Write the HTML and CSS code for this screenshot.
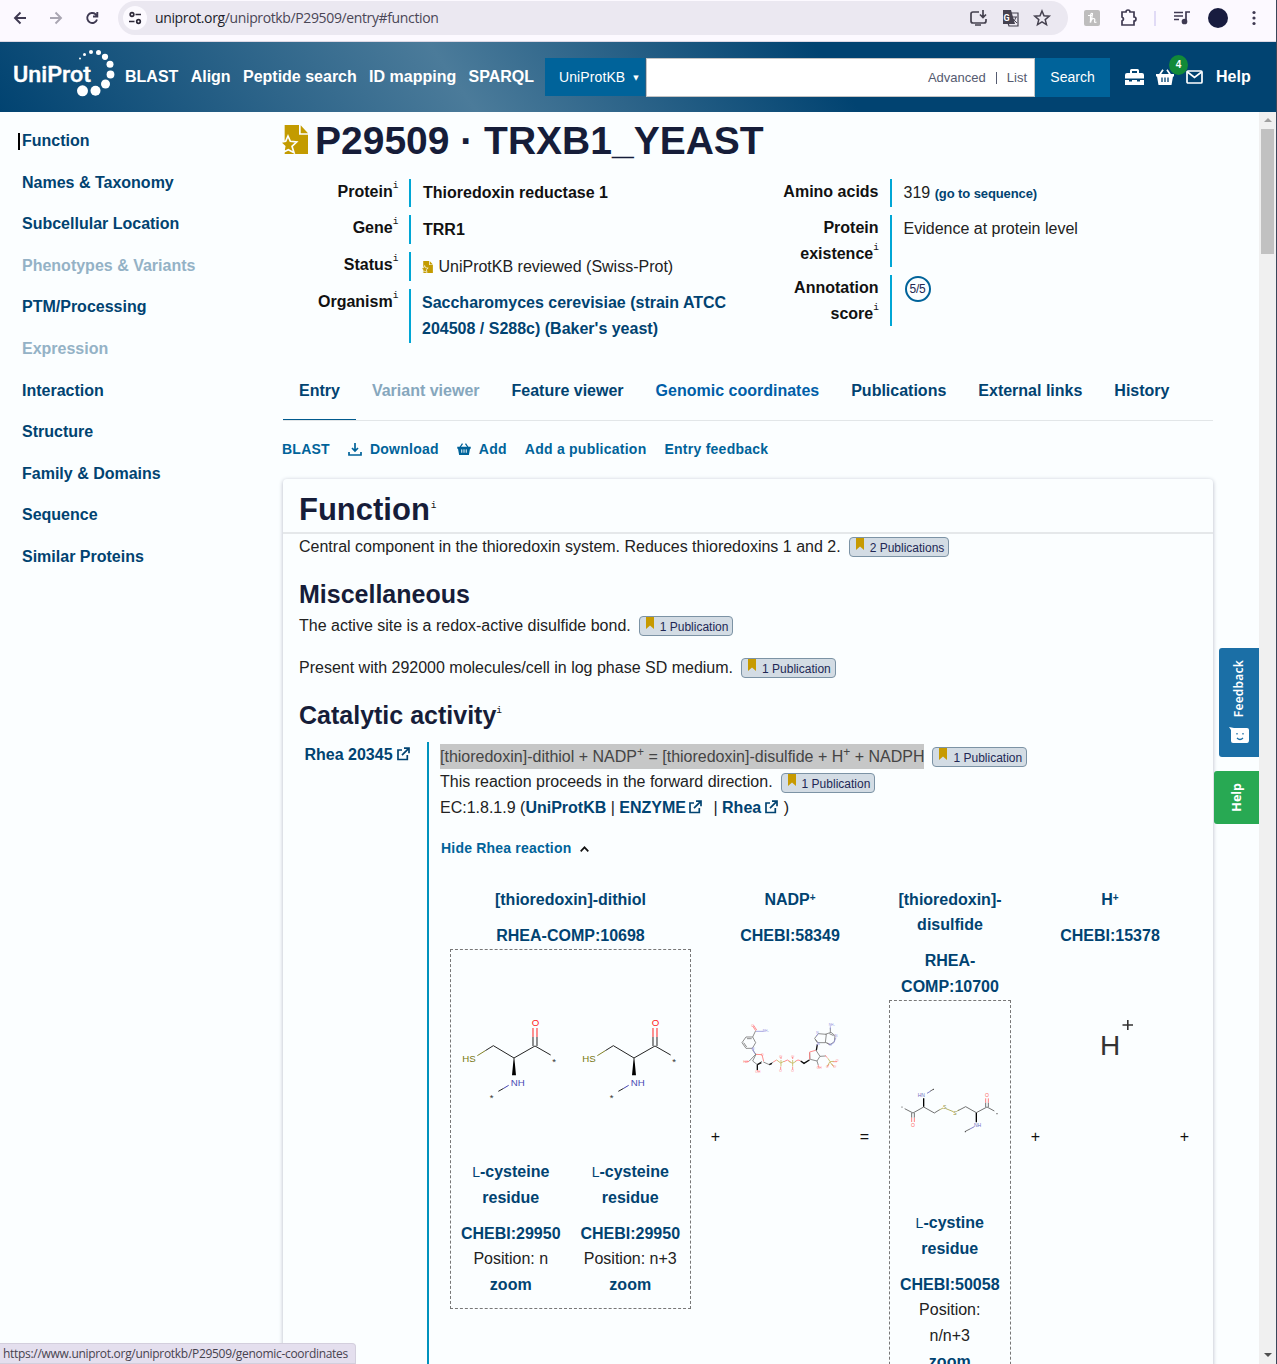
FILE: index.html
```html
<!DOCTYPE html>
<html lang="en">
<head>
<meta charset="utf-8">
<title>P29509 · TRXB1_YEAST</title>
<link rel="stylesheet" href="styles.css">
</head>
<body>
<svg class="defs" width="0" height="0" aria-hidden="true">
  <symbol id="reviewed" viewBox="0 0 78 87"><path fill="#c39b00" d="M8 0h43v29h27v58H8z"/><path fill="#c39b00" d="M56 1v24h22z"/><path fill="#c39b00" stroke="#fbfeff" stroke-width="5" d="M18 33l7 16 19 2-14 13 6 19-17-9-14 7 3-17L-5 52l16-3z"/></symbol>
  <symbol id="ext" viewBox="0 0 14 14"><path fill="none" stroke="currentColor" stroke-width="1.7" d="M6 3H2v9.5h9.300V8M8 1.200h5v5M13 1.200L6 8.200"/></symbol>
  <symbol id="basket" viewBox="0 0 18 16"><path fill="currentColor" d="M0 5h18v2.500h-1L15.500 16h-13L1 7.500H0z"/><path fill="none" stroke="currentColor" stroke-width="1.700" d="M3.500 6L7 .8M14.500 6L11 .8"/><path stroke="var(--hole)" stroke-width="1.300" d="M6 8.500v4.500M9 8.500v4.500M12 8.500v4.500"/></symbol>
  <symbol id="mark" viewBox="0 0 8 12"><path fill="#c79a00" d="M0 0h8v12L4 8.500 0 12z"/></symbol>
  <symbol id="cysteine-bonds" viewBox="451 950 120 209">
    <g transform="translate(440 940) scale(.33333)">
      <path fill="none" stroke="#222" stroke-width="3" d="M136 332L160 317 222 354 285 318 332 345M279 318V291M291 318V291M175 454l16-9"/>
      <path stroke="#f22" stroke-width="3" d="M279 291v-27M291 291v-27"/>
      <path stroke="#808022" stroke-width="3" d="M112 347l24-15"/><path stroke="#4040b0" stroke-width="3" d="M191 445l15-9"/>
      <path d="M221 354h2l5 52h-12z"/>
    </g>
  </symbol>
</svg>

<div class="browser">
  <svg class="nav-icons" width="110" height="36" viewBox="0 0 110 36" fill="none" stroke="#3f3a52" stroke-width="1.900"><path d="M26 18H15M20.500 12.500L15 18l5.500 5.500"/><path stroke="#a9a6b2" d="M50 18h11M55.500 12.500L61 18l-5.500 5.500"/><path d="M97 19.500a5 5 0 1 1-1.500-5.300L97 15.800M97.300 12v4.500H93"/></svg>
  <div class="omnibox">
    <svg class="site" width="24" height="24" viewBox="0 0 24 24" fill="none" stroke="#2c2838" stroke-width="1.700"><circle cx="12" cy="12" r="12" fill="#fcfaff" stroke="none"/><circle cx="9" cy="8.500" r="1.800"/><path d="M12.500 8.500H18M6 15.500h5.500"/><circle cx="15.500" cy="15.500" r="1.800"/></svg>
    <span class="url"><b>uniprot.org</b>/uniprotkb/P29509/entry#function</span>
    <svg class="omni-icons" width="90" height="24" viewBox="965 6 90 24" fill="none" stroke="#45414f" stroke-width="1.700"><path d="M979 12h-6a2 2 0 0 0-2 2v7a2 2 0 0 0 2 2h11a2 2 0 0 0 2-2v-2M983 10v7M980 14.500l3 3 3-3M975 25h6"/><path fill="#45414f" stroke="none" d="M1003 10h8l4 14h-12z"/><path stroke-width="1.200" d="M1011 13h7v13h-9l-1-3"/><text x="1003.500" y="21" font-family="Roboto, sans-serif" font-size="9" font-weight="700" fill="#fff" stroke="none">G</text><path stroke-width="1" d="M1012 17h5M1016 17q-1 4-4 6M1013 19l4 4"/><path stroke-width="1.500" d="M1042 11l2 4.800 5.200.4-4 3.400 1.300 5-4.500-2.700-4.500 2.700 1.300-5-4-3.400 5.200-.4z"/></svg>
  </div>
  <svg class="ext-icons" width="200" height="36" viewBox="1077 0 200 36" fill="none" stroke="#3f3a52" stroke-width="1.700"><rect x="1084" y="10" width="16" height="16" rx="2" fill="#bebdbd" stroke="none"/><path stroke="#fff" stroke-width="1.200" d="M1090 22.500q2.500-5 2.500-9q-2-1-2 3v6q1-4 3-4t1 3q0 1.500 2 .5M1088 15.500h4"/><path d="M1122 12h4a2 2 0 0 1 4 0h4v5a2 2 0 0 1 0 4v4h-12v-4q3-2 0-4z"/><path stroke="#dcd6f5" d="M1155 11v15"/><path d="M1174 12.500h9M1174 16h9M1174 19.500h5M1186 21v-9h4"/><circle cx="1184.500" cy="21.500" r="2" fill="#3f3a52"/><circle cx="1218" cy="18" r="10" fill="#181c3f" stroke="none"/><g fill="#3f3a52" stroke="none"><circle cx="1254" cy="12.500" r="1.600"/><circle cx="1254" cy="18" r="1.600"/><circle cx="1254" cy="23.500" r="1.600"/></g></svg>
</div>

<header class="top">
  <svg class="logo" width="102" height="50" viewBox="13 48 102 50"><text x="13" y="81.500" textLength="78" lengthAdjust="spacingAndGlyphs" font-family="Roboto, sans-serif" font-size="22.500" font-weight="500" fill="#fff" stroke="#fff" stroke-width=".4">UniProt</text><g fill="#fff"><circle cx="80" cy="58.500" r="1"/><circle cx="84.500" cy="54.500" r="1.500"/><circle cx="91" cy="52" r="2"/><circle cx="98.500" cy="52.500" r="2.500"/><circle cx="105" cy="56.800" r="3.100"/><circle cx="110" cy="64.200" r="3.500"/><circle cx="110.500" cy="74.500" r="3.900"/><circle cx="105.500" cy="84" r="4.500"/><circle cx="95.500" cy="90.800" r="5"/><circle cx="82.500" cy="90.800" r="5.500"/></g></svg>
  <nav class="links"><a>BLAST</a><a>Align</a><a>Peptide search</a><a>ID mapping</a><a>SPARQL</a></nav>
  <div class="search"><span class="ns">UniProtKB <i>▼</i></span><span class="field">Advanced<em></em>List</span><span class="go">Search</span></div>
  <div class="tools">
    <svg width="19" height="16" viewBox="0 0 19 16" fill="#fff"><path d="M5 4V1.500Q5 0 6.500 0h6Q14 0 14 1.500V4h3q2 0 2 2v3.500H0V6q0-2 2-2zM7 2v2h5V2zM0 11h4v1.500h3V11h5v1.500h3V11h4v5H0z" fill-rule="evenodd"/></svg>
    <span class="cart"><svg width="18" height="16"><use href="#basket"/></svg><b>4</b></span>
    <svg width="17" height="14" viewBox="0 0 17 14" fill="none" stroke="#fff" stroke-width="1.700"><rect x="1" y="1" width="15" height="12" rx="1"/><path d="M1.500 2l7 5.500 7-5.500"/></svg>
    <strong>Help</strong>
  </div>
</header>

<div class="page">
  <aside><a class="current">Function</a><a>Names &amp; Taxonomy</a><a>Subcellular Location</a><a class="off">Phenotypes &amp; Variants</a><a>PTM/Processing</a><a class="off">Expression</a><a>Interaction</a><a>Structure</a><a>Family &amp; Domains</a><a>Sequence</a><a>Similar Proteins</a></aside>
  <main>
    <h1><svg width="26" height="29"><use href="#reviewed"/></svg><span>P29509 · TRXB1_YEAST</span></h1>
    <div class="info">
      <dl>
        <dt class="r1">Protein<sup>i</sup></dt><dd class="r1"><b>Thioredoxin reductase 1</b></dd>
        <dt class="r2">Gene<sup>i</sup></dt><dd class="r2"><b>TRR1</b></dd>
        <dt>Status<sup>i</sup></dt><dd class="r2"><svg class="mini" width="11" height="12"><use href="#reviewed"/></svg> UniProtKB reviewed (Swiss-Prot)</dd>
        <dt>Organism<sup>i</sup></dt><dd class="r4"><a class="organism">Saccharomyces cerevisiae (strain ATCC<br>204508 / S288c) (Baker's yeast)</a></dd>
      </dl>
      <dl class="right">
        <dt>Amino acids</dt><dd class="r1">319 <a class="small">(go to sequence)</a></dd>
        <dt>Protein<br>existence<sup>i</sup></dt><dd class="r5">Evidence at protein level</dd>
        <dt>Annotation<br>score<sup>i</sup></dt><dd class="r6"><span class="score">5/5</span></dd>
      </dl>
    </div>
    <nav class="tabs"><a class="sel">Entry</a><a class="off">Variant viewer</a><a>Feature viewer</a><a class="hover">Genomic coordinates</a><a>Publications</a><a>External links</a><a>History</a></nav>
    <div class="actions"><a>BLAST</a><a><svg width="14" height="13" viewBox="0 0 14 13" fill="none" stroke="currentColor" stroke-width="1.700"><path d="M7 0v8M4 5l3 3 3-3M1 9v3h12V9"/></svg>Download</a><a><svg width="14" height="12"><use href="#basket"/></svg>Add</a><a>Add a publication</a><a>Entry feedback</a></div>

    <section class="card">
      <h2>Function<sup>i</sup></h2>
      <p class="central"><span>Central component in the thioredoxin system. Reduces thioredoxins 1 and 2.</span><span class="pub"><svg width="8" height="12"><use href="#mark"/></svg>2 Publications</span></p>
      <h3>Miscellaneous</h3>
      <p><span>The active site is a redox-active disulfide bond.</span><span class="pub"><svg width="8" height="12"><use href="#mark"/></svg>1 Publication</span></p>
      <p class="present"><span>Present with 292000 molecules/cell in log phase SD medium.</span><span class="pub"><svg width="8" height="12"><use href="#mark"/></svg>1 Publication</span></p>
      <h3 class="cat">Catalytic activity<sup>i</sup></h3>
      <div class="rhea">
        <div class="rhea-id"><a>Rhea 20345 <svg class="ex" width="14" height="14"><use href="#ext"/></svg></a></div>
        <div class="rhea-body">
          <p><span class="hl">[thioredoxin]-dithiol + NADP<sup>+</sup> = [thioredoxin]-disulfide + H<sup>+</sup> + NADPH</span><span class="pub"><svg width="8" height="12"><use href="#mark"/></svg>1 Publication</span></p>
          <p><span>This reaction proceeds in the forward direction.</span><span class="pub"><svg width="8" height="12"><use href="#mark"/></svg>1 Publication</span></p>
          <div class="ec">EC:1.8.1.9 (<a>UniProtKB</a> | <a>ENZYME <svg class="ex" width="14" height="14"><use href="#ext"/></svg></a><span class="bar">|</span> <a>Rhea <svg class="ex" width="14" height="14"><use href="#ext"/></svg></a><span class="paren">)</span></div>
          <div class="hide">Hide Rhea reaction<svg width="9" height="6" viewBox="0 0 9 6" fill="none" stroke="#111" stroke-width="1.700"><path d="M.7 5.300l3.800-4 3.800 4"/></svg></div>
          <div class="reaction">
            <div class="part wide"><a>[thioredoxin]-dithiol</a><a class="id">RHEA-COMP:10698</a>
              <div class="box">
                <div class="residue"><svg class="cys" width="120" height="209" viewBox="0 0 120 209"><use href="#cysteine-bonds" width="120" height="209"/><text x="11.300" y="112.300" fill="#777710">HS</text><text x="80.700" y="76" fill="#f22">O</text><text x="59.700" y="136" fill="#4a4ab5">NH</text><text x="101.300" y="114.700" fill="#333">*</text><text x="38.700" y="151" fill="#333">*</text></svg><a><small>L</small>-cysteine<br>residue</a><a class="id">CHEBI:29950</a><span>Position: n</span><a>zoom</a></div>
                <div class="residue"><svg class="cys" width="120" height="209" viewBox="0 0 120 209"><use href="#cysteine-bonds" width="120" height="209"/><text x="11.300" y="112.300" fill="#777710">HS</text><text x="80.700" y="76" fill="#f22">O</text><text x="59.700" y="136" fill="#4a4ab5">NH</text><text x="101.300" y="114.700" fill="#333">*</text><text x="38.700" y="151" fill="#333">*</text></svg><a><small>L</small>-cysteine<br>residue</a><a class="id">CHEBI:29950</a><span>Position: n+3</span><a>zoom</a></div>
              </div>
            </div>
            <span class="op">+</span>
            <div class="part small-part"><a>NADP<sup>+</sup></a><a class="id">CHEBI:58349</a>
              <svg width="99" height="160" viewBox="741 948 99 160"><g transform="translate(700 980) scale(.33333)" fill="none" stroke="#777" stroke-width="2.500" font-family="Liberation Sans, sans-serif" font-size="10">
                <path d="M138 171h20l9 17-10 17h-19l-12-17zM141 176h14M131 188l9 13M158 171l9-19M147 244l21-22M157 209l11 14M168 223l-10 20 14 11 14-10M190 246l18 8 12-8M302 243l10 7 18-11-1-21M348 211l12 18-9 14-20-5M351 243l4 13M360 229l17-1M355 161l-11 14 8 13 24 0 3-25zM376 163l17-6 12 10-2 18-13 9-14-7M391 157V144M346 178l7 9M388 161l13 6M380 188l9 6"/>
                <path stroke="#111" stroke-width="4" d="M172 254v16M172 254l12-6M208 254l8-4M302 243l10 7 16-10M349 211l3-18"/>
                <path stroke="#f77" d="M167 152l-9-14M170 150l-9-14M168 223l18 1 5 20M147 244l-12 2M220 246l10-6M252 245l10-5 10 6M286 244l8-4 7 2M329 238v-22l18-5M375 226l8 8M398 245h13M243 237v-7M278 237v-7M242 260v9M278 260v9M355 256v7M387 252l-5 8M395 252l7 8M172 270v4"/>
                <path stroke="#9696dc" d="M158 205l6 16M168 154h23M391 148v-9M354 162l-6 6M392 194l9-5 7-16M350 196l5-4"/>
                <path stroke="#c4b75c" d="M230 240l12 9 10-5M266 244l12 6 10-6M243 240v19M278 240v19M384 235l6 10 11-1M389 246l-7 13M390 246l10 13"/>
                <g stroke="none" fill="#ff7a7a"><text x="154" y="141">O</text><text x="130" y="249">HO</text><text x="166" y="279">OH</text><text x="238" y="233">O⁻</text><text x="274" y="233">O⁻</text><text x="238" y="276">O</text><text x="274" y="276">O</text><text x="183" y="228">O</text><text x="350" y="267">OH</text><text x="378" y="265">O</text><text x="400" y="264">O⁻</text><text x="407" y="245">O⁻</text></g>
                <g stroke="none" fill="#9494e0"><text x="155" y="211">N⁺</text><text x="188" y="157">NH₂</text><text x="386" y="138">NH₂</text><text x="349" y="163">N</text><text x="405" y="172">N</text><text x="387" y="198">N</text><text x="352" y="195">N</text></g>
              </g></svg></div>
            <span class="op">=</span>
            <div class="part mid"><a>[thioredoxin]-<br>disulfide</a><a class="id">RHEA-<br>COMP:10700</a>
              <div class="box single"><div class="residue">
                <svg width="120" height="209" viewBox="890 1001 120 209"><g transform="translate(700 980) scale(.33333)" fill="none" stroke="#555" stroke-width="2.500" font-family="Liberation Sans, sans-serif" font-size="15">
                  <path d="M614 386l25 13 32-18 32 18 16-10M774 392l23-12 32 18 32-17 22 12M635 399v14M643 399v14M857 381v-13M865 381v-13M690 334l10-6M796 454l14-7"/>
                  <path stroke="#f66" d="M635 413v13M643 413v13M857 368v-13M865 368v-13"/><path stroke="#6868bd" d="M681 340l10-6M810 447l13-7"/><path stroke="#a6a24c" d="M718 390l11-6M738 386l22 9M769 395l7-5"/>
                  <path stroke="#000" stroke-width="4" d="M671 380v-25M829 398v29"/>
                  <g stroke="none" fill="#6d6dc2"><text x="653" y="352">HN</text><text x="822" y="441">NH</text></g><g stroke="none" fill="#f66"><text x="633" y="441">O</text><text x="855" y="352">O</text></g><g stroke="none" fill="#8d8926"><text x="729" y="387">S</text><text x="760" y="405">S</text></g>
                  <g stroke="none" fill="#333"><circle cx="606" cy="381" r="1.800"/><circle cx="700" cy="328" r="1.800"/><circle cx="796" cy="455" r="1.800"/><circle cx="891" cy="401" r="1.800"/></g>
                </g></svg><a><small>L</small>-cystine<br>residue</a><a class="id">CHEBI:50058</a><span>Position:<br>n/n+3</span><a>zoom</a></div></div>
            </div>
            <span class="op">+</span>
            <div class="part small-part"><a>H<sup>+</sup></a><a class="id">CHEBI:15378</a>
              <svg width="99" height="160" viewBox="1060 948 99 160" fill="#333" font-family="Liberation Sans, sans-serif"><text x="1099" y="1055" font-size="28">H</text><path stroke="#333" stroke-width="1.600" d="M1121.500 1025h10.500M1126.800 1020v10"/></svg></div>
            <span class="op">+</span>
          </div>
        </div>
      </div>
    </section>
  </main>
  <div class="scroll"><i class="up"></i><div class="thumb"></div><i class="down"></i></div>
</div>
<div class="feedback"><svg width="20" height="16" viewBox="0 0 20 16"><path fill="#fff" d="M0 0l5 1h13q2 0 2 2v10q0 3-2 3H4q-2 0-2-2V3z"/><path stroke="#1b6fa6" stroke-width="1.300" fill="none" d="M8 11q3 3 6 0M8 6v1.500M14 6v1.500"/></svg><span>Feedback</span></div>
<div class="helptab"><span>Help</span></div>
<div class="status">https://www.uniprot.org/uniprotkb/P29509/genomic-coordinates</div>
</body>
</html>
```
FILE: styles.css
```css
* { box-sizing: border-box; }
body { margin: 0; width: 1277px; height: 1364px; overflow: hidden; position: relative; display: flex; flex-direction: column; background: #fbfeff; border-right: 1px solid #39465a; font: 16px/25.6px "Liberation Sans", Arial, sans-serif; color: #222; }
.defs { position: absolute; }
svg { flex: none; }
svg text { white-space: pre; }
a { color: #014371; font-weight: 700; }
p, h1, h2, h3, dl, dd { margin: 0; }

.browser { height: 42px; flex: none; display: flex; background: #fcf9ff; border-bottom: 1px solid #ddd8e4; }
.nav-icons { margin-right: 8px; }
.omnibox { width: 950px; height: 34px; margin-top: 1px; border-radius: 17px; background: #ebe8f1; display: flex; align-items: center; padding-left: 5px; }
.url { margin-left: 8px; width: 810px; font: 14px/20px "Open Sans", sans-serif; letter-spacing: -.37px; color: #4a4656; }
.url b { font-weight: 400; color: #211e2b; }
.ext-icons { margin-left: 9px; margin-right: -1px; }

.top { height: 70px; flex: none; display: flex; align-items: center; padding-left: 13px; background: linear-gradient(55deg, #014371 0%, #4b7b9a 36%, #014371 65%); --hole: #014371; }
.logo { margin-top: -8px; }
.links { margin-left: 10px; display: flex; justify-content: space-between; width: 409px; }
.links a, .tools strong { color: #fff; font-weight: 700; }
.search { display: flex; margin: 1px 0 0 11px; width: 565px; height: 39px; font-size: 14px; }
.ns { width: 100px; height: 38px; background: #00639a; color: #fff; line-height: 38px; padding-left: 14px; white-space: nowrap; letter-spacing: .1px; }
.ns i { font: 7px "DejaVu Sans", sans-serif; vertical-align: 2px; margin-left: 4px; }
.field { flex: 1; margin-left: 1px; background: #fff; border: 1px solid #c4c4c4; display: flex; align-items: center; justify-content: flex-end; padding-right: 7px; color: #555b70; font-size: 13px; }
.field em { width: 1px; height: 12px; background: #555b70; margin: 0 10px; }
.go { width: 75px; background: #00639a; color: #fff; line-height: 38px; text-align: center; }
.tools { display: flex; align-items: center; margin-left: 15px; gap: 12px; }
.tools strong { margin-left: 1px; }
.cart { position: relative; display: flex; color: #fff; }
.cart b { position: absolute; left: 13px; top: -14px; width: 19px; height: 20px; border-radius: 50%; background: #128a38; font: 700 10px/20px "Liberation Sans", sans-serif; text-align: center; }

.page { flex: 1; min-height: 0; display: flex; }
aside { width: 282px; flex: none; display: flex; flex-direction: column; padding: 8px 0 0 18px; }
aside a { padding: 8px 0 8px 4px; }
.current { background: linear-gradient(#000, #000) 0 13px / 2px 17px no-repeat; }
.off { color: #94b2c6; }
main { width: 931px; flex: none; }
h1 { height: 67px; display: flex; font-size: 39px; line-height: 58px; color: #161d39; white-space: nowrap; }
h1 svg { margin: 13px 7px 0 0; }
.info { height: 182px; display: flex; }
dl { width: 466px; display: grid; grid-template-columns: 127px 1fr; align-content: start; row-gap: 8px; }
dl.right { grid-template-columns: 142px 1fr; }
dt { grid-column: 1; text-align: right; padding-right: 11px; font-weight: 700; color: #111; white-space: nowrap; height: 0; }
sup { line-height: 0; }
dt sup, h2 sup, h3 sup { font: 400 9.500px/0 "Liberation Mono", monospace; vertical-align: 9px; color: #111; margin-right: -.4px; }
dd { grid-column: 2; border-left: 2px solid #00a6d5; padding: 1.400px 0 0 12px; white-space: nowrap; }
dd b { color: #111; }
dd.r2 { padding-top: 2px; }
.mini { vertical-align: -1px; margin-left: -1px; margin-right: 1px; }
.organism { margin-left: -1px; display: block; }
.r1 { height: 28px; } .r2 { height: 29px; } .r4 { height: 54px; } .r5 { height: 52px; } .r6 { height: 51px; }
.small { font-size: 13px; letter-spacing: -.1px; }
.score { display: block; width: 26px; height: 26px; margin: 0 0 0 1px; border: 2px solid #00639a; border-radius: 50%; font-size: 12px; line-height: 22px; text-align: center; color: #222752; letter-spacing: -.3px; }

.tabs { height: 60px; display: flex; margin-left: 1px; border-bottom: 1px solid #e2e6e8; line-height: 59px; }
.tabs a { padding: 0 16px; height: 59px; white-space: nowrap; }
.tabs .sel { border-bottom: 1px solid #015a8e; }
.tabs .off { color: #86a7bd; }
.tabs .hover { color: #005ea8; }
.actions { height: 58px; padding-bottom: 2px; display: flex; gap: 18px; font-size: 14px; line-height: 56px; letter-spacing: .25px; --hole: #fbfeff; }
.actions a { color: #00639a; display: flex; align-items: center; white-space: nowrap; }
.actions svg { margin-right: 8px; }

.card { position: relative; margin-left: 1px; width: 930px; height: 900px; border-radius: 4px; box-shadow: 0 1px 4px #b4b8c6; background: #fbfeff; }
h2 { height: 55px; padding-left: 16px; border-bottom: 2px solid #e5e8ea; font-size: 31px; line-height: 62px; color: #161d39; }
h2 sup { vertical-align: 12px; margin-left: 1px; }
h3 { margin: 19px 0 0 16px; font-size: 25px; line-height: 30px; color: #161d39; height: 34px; }
h3 sup { vertical-align: 11px; }
p { display: flex; align-items: center; height: 25.600px; padding-left: 16px; white-space: nowrap; }
.pub { display: flex; height: 20px; margin: 1px 0 0 8px; padding: 0 4px 0 6px; border: 1px solid #7c93a5; border-radius: 4px; background: #d3dce4; font-size: 12px; line-height: 20px; color: #222855; }
.pub svg { margin-right: 6px; }
.present { margin-top: 17px; }
h3.cat { margin-top: 19px; height: 42px; }
.rhea { display: flex; height: 660px; }
.rhea-id { width: 144px; padding: 0 17px 0 0; text-align: right; white-space: nowrap; }
.ex { vertical-align: -1.500px; margin-left: -1px; }
.rhea-body { width: 770px; border-left: 2px solid #0092bd; padding: 2px 0 0 11px; }
.rhea-body p { padding: 0; }
.hl { background: #c6c7c7; color: #444; }
.hl sup { font-size: 12px; vertical-align: 6px; }
.ec { white-space: nowrap; }
.ec .ex { margin-left: -2px; }
.bar { margin-left: 11px; }
.paren { margin-left: 6px; }
.hide { margin: 15px 0 0 1px; font-size: 14px; font-weight: 700; letter-spacing: .2px; color: #00639a; }
.hide svg { margin: 0 0 1px 9px; }
.reaction { display: flex; align-items: flex-start; width: 757px; height: 480px; margin-top: 25.600px; padding-left: 10px; overflow: hidden; text-align: center; }
.part { flex: none; }
.part > a, .residue > a, .residue > span { display: block; white-space: nowrap; }
.part .id { margin-top: 10.400px; }
.wide { width: 241px; } .mid { width: 122px; } .small-part { width: 100px; }
.part sup { font-size: 10px; vertical-align: 4px; }
.op { flex: none; width: 49px; padding-top: 237px; color: #111; }
.box { display: flex; height: 360px; margin-top: .8px; border: 1px dashed #777; }
.box.single { height: 420px; }
.residue { width: 119.500px; flex: none; }
.residue svg { display: block; }
.cys text { font: 9.700px "Liberation Sans", sans-serif; }
.residue small { font-size: 14px; font-weight: 400; line-height: 0; }

.scroll { margin-left: auto; width: 17px; background: #f0f0f0; display: flex; flex-direction: column; align-items: center; padding: 6px 0 7px; }
.up, .down { border: 4px solid transparent; }
.up { border-top: 0; border-bottom-color: #a0a0a0; }
.down { border-bottom: 0; border-top-color: #505050; margin-top: auto; }
.thumb { width: 13px; height: 125px; margin-top: 7px; background: #c1c1c1; }

.feedback, .helptab { position: absolute; display: flex; flex-direction: column; align-items: center; color: #fff; }
.feedback { left: 1219px; top: 648px; width: 40px; height: 109px; background: #1b6fa6; border-radius: 3px 0 0 3px; flex-direction: column-reverse; padding: 12px 0 14px; justify-content: space-between; font: 600 12px/16px "Noto Sans", sans-serif; letter-spacing: .2px; }
.helptab { left: 1214px; top: 771px; width: 45px; height: 53px; background: #28a953; border-radius: 3px 0 0 3px; justify-content: center; font: 700 12.500px/16px "Noto Sans", sans-serif; }
.feedback span, .helptab span { writing-mode: vertical-rl; transform: rotate(180deg); }
.status { position: absolute; left: 0; top: 1343px; width: 356px; height: 21px; padding-left: 3px; background: #e4dfee; border: 1px solid #d3cfdd; border-left: 0; border-radius: 0 4px 0 0; font: 12px/20px "Open Sans", sans-serif; letter-spacing: -.3px; color: #47434f; white-space: nowrap; }
```
